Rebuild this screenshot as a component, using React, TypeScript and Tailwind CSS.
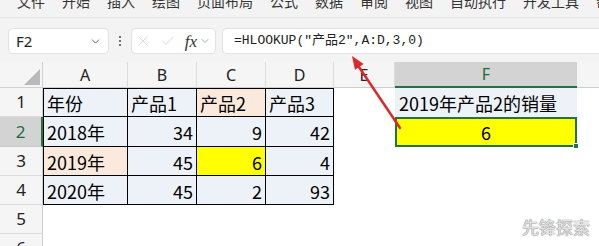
import { ChevronDown, X, Check } from 'lucide-react';

const menus = ['文件', '开始', '插入', '绘图', '页面布局', '公式', '数据', '审阅', '视图', '自动执行', '开发工具', '帮'];

const blue = 'bg-[#edf2f9]';
const peach = 'bg-[#fbe9dc]';
const yellow = 'bg-[#ffff00]';

type Cell = { text: string; bg: string; right?: boolean };

const table: Cell[][] = [
  [
    { text: '年份', bg: blue },
    { text: '产品1', bg: blue },
    { text: '产品2', bg: peach },
    { text: '产品3', bg: blue },
  ],
  [
    { text: '2018年', bg: blue },
    { text: '34', bg: blue, right: true },
    { text: '9', bg: blue, right: true },
    { text: '42', bg: blue, right: true },
  ],
  [
    { text: '2019年', bg: peach },
    { text: '45', bg: blue, right: true },
    { text: '6', bg: yellow, right: true },
    { text: '4', bg: blue, right: true },
  ],
  [
    { text: '2020年', bg: blue },
    { text: '45', bg: blue, right: true },
    { text: '2', bg: blue, right: true },
    { text: '93', bg: blue, right: true },
  ],
];

const colHeads = ['A', 'B', 'C', 'D', 'E'];

export default function App() {
  return (
    <div className="relative w-[599px] h-[246px] overflow-hidden bg-white font-['Noto_Sans_CJK_SC',sans-serif] text-black">
      {/* Ribbon tabs + formula bar */}
      <div className="bg-[#f3f3f3] h-[62px] flex flex-col">
        <div className="h-[18px] border-b border-[#e6e6e6] overflow-hidden">
          <div className="flex gap-[17px] pl-[17px] mt-[-6px] text-[14px] leading-[14px] text-[#333] whitespace-nowrap">
            {menus.map((m) => (
              <span key={m}>{m}</span>
            ))}
          </div>
        </div>
        <div className="flex items-center h-[26px] mt-[10px] pl-[8px]">
          <div className="w-[101px] h-[26px] bg-white rounded-[5px] border border-[#e2e2e2] flex items-center justify-between pl-[7px] pr-[6px]">
            <span className="font-['Noto_Sans',sans-serif] text-[15px] text-[#222]">F2</span>
            <ChevronDown size={13} strokeWidth={1.6} className="text-[#555]" />
          </div>
          <div className="w-[22px] flex flex-col items-center gap-[2px]">
            <span className="w-[2px] h-[2px] bg-[#444] rounded-full" />
            <span className="w-[2px] h-[2px] bg-[#444] rounded-full" />
            <span className="w-[2px] h-[2px] bg-[#444] rounded-full" />
          </div>
          <div className="w-[85px] h-[26px] bg-white rounded-[5px] border border-[#e2e2e2] flex items-center pl-[3px] pr-[4px]">
            <X size={16} strokeWidth={1} className="text-[#c2c2c2]" />
            <Check size={16} strokeWidth={1} className="text-[#c2c2c2] ml-[9px]" />
            <span className="ml-[9px] font-['Liberation_Serif',serif] italic text-[17px] leading-none text-[#333]">fx</span>
            <ChevronDown size={12} strokeWidth={1.4} className="text-[#777] ml-[2px]" />
          </div>
          <div className="ml-[6px] flex-1 h-[26px] bg-white rounded-l-[5px] border border-r-0 border-[#e2e2e2] flex items-center pl-[11px]">
            <span className="font-['Liberation_Mono','Noto_Sans_CJK_SC',monospace] text-[13px] text-[#222] whitespace-nowrap">
              =HLOOKUP("产品2",A:D,3,0)
            </span>
          </div>
        </div>
      </div>

      {/* Sheet grid */}
      <div className="grid grid-cols-[43px_85px_69px_69px_68px_61px_182px_1fr] grid-rows-[26px_29px_30px_29px_29px_29px_29px] font-['Noto_Sans',sans-serif]">
        {/* header row */}
        <div className="bg-[#f5f5f5] border-r border-b border-[#d0d0d0] flex items-end justify-end p-[2px]">
          <svg width="16" height="16" viewBox="0 0 16 16">
            <polygon points="16,0 16,16 0,16" fill="#b9b9b9" />
          </svg>
        </div>
        {colHeads.map((c) => (
          <div key={c} className="bg-[#f5f5f5] border-r border-r-[#dcdcdc] border-b border-b-[#cfcfcf] flex items-center justify-center text-[16px] text-[#222]">
            {c}
          </div>
        ))}
        <div className="bg-[#d3d3d3] border-b-2 border-b-[#217346] flex items-center justify-center text-[16px] text-[#1d6b3f]">
          F
        </div>
        <div className="bg-[#f5f5f5] border-b border-b-[#cfcfcf]" />

        {/* data rows */}
        {[1, 2, 3, 4, 5, 6].map((r) => {
          const row = table[r - 1];
          const selected = r === 2;
          return [
            <div
              key={`h${r}`}
              className={
                selected
                  ? 'bg-[#d3d3d3] border-b border-b-[#c8c8c8] border-r-2 border-r-[#217346] flex items-center justify-center text-[17px] text-[#1d6b3f]'
                  : 'bg-[#f5f5f5] border-b border-b-[#dcdcdc] border-r border-r-[#cfcfcf] flex items-center justify-center text-[17px] text-[#222]'
              }
            >
              {r}
            </div>,
            ...(row
              ? row.map((cell, i) => (
                  <div
                    key={`c${r}${i}`}
                    className={`${cell.bg} border-r border-b border-black ${r === 1 ? 'border-t' : ''} ${i === 0 ? 'border-l' : ''} flex items-center px-[3px] pt-[1px] font-['Noto_Sans_CJK_SC',sans-serif] text-[18px] leading-none ${cell.right ? 'justify-end' : 'justify-start'}`}
                  >
                    {cell.text}
                  </div>
                ))
              : [0, 1, 2, 3].map((i) => <div key={`c${r}${i}`} />)),
            <div key={`e${r}`} />,
            r === 1 ? (
              <div key={`f${r}`} className={`${blue} flex items-center pl-[4px] pt-[1px] font-['Noto_Sans_CJK_SC',sans-serif] text-[18px] leading-none whitespace-nowrap`}>
                2019年产品2的销量
              </div>
            ) : r === 2 ? (
              <div key={`f${r}`} className={`${yellow} relative border-2 border-[#217346] flex items-center justify-center font-['Noto_Sans_CJK_SC',sans-serif] text-[18px] leading-none`}>
                6
                <span className="absolute -right-[4px] -bottom-[4px] w-[6px] h-[6px] bg-[#217346] border border-white" />
              </div>
            ) : (
              <div key={`f${r}`} />
            ),
            <div key={`g${r}`} />,
          ];
        })}
      </div>

      {/* annotation arrow */}
      <svg className="absolute inset-0 pointer-events-none" width="599" height="246" viewBox="0 0 599 246">
        <line x1="400" y1="128" x2="359" y2="67" stroke="#e0282a" strokeWidth="2.5" strokeLinecap="round" />
        <polygon points="352,56 363.6,64 355,69.8" fill="#e0282a" />
      </svg>

      {/* watermark */}
      <div className="absolute right-[9px] bottom-[11px] text-[17px] leading-none text-[#e4e4e4] font-['Noto_Sans_CJK_SC',sans-serif] [text-shadow:0_0_1px_#7a7a7a,0_0_1px_#7a7a7a]">
        先锋探索
      </div>
    </div>
  );
}
